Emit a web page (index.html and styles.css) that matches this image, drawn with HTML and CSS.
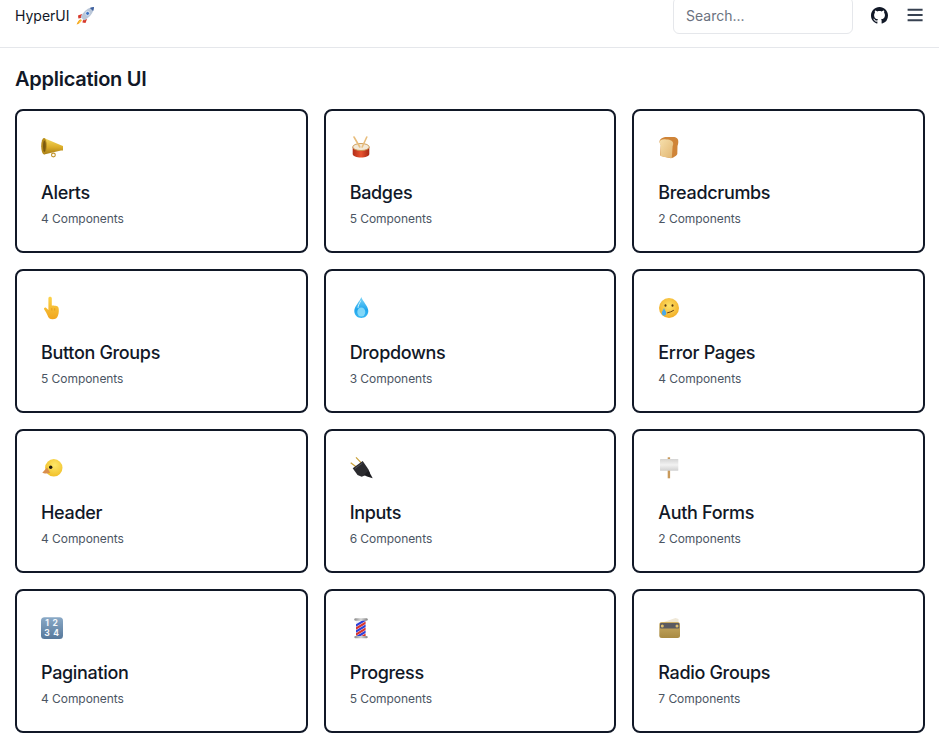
FILE: index.html
```html
<!DOCTYPE html>
<html lang="en">
<head>
<meta charset="utf-8">
<title>HyperUI</title>
<link rel="stylesheet" href="styles.css">
</head>
<body>
<svg class="defs" width="0" height="0" aria-hidden="true">
  <defs>
    <linearGradient id="gGold" x1="0" y1="0" x2="0" y2="1"><stop offset="0" stop-color="#f6dc62"/><stop offset=".55" stop-color="#dcae2a"/><stop offset="1" stop-color="#a57c16"/></linearGradient>
    <linearGradient id="gRed" x1="0" y1="0" x2="1" y2="0"><stop offset="0" stop-color="#b02e18"/><stop offset=".5" stop-color="#e8522e"/><stop offset="1" stop-color="#a62814"/></linearGradient>
    <linearGradient id="gBread" x1="0" y1="0" x2="1" y2="1"><stop offset="0" stop-color="#f6e0ad"/><stop offset="1" stop-color="#e2b671"/></linearGradient>
    <linearGradient id="gHand" x1="0" y1="0" x2="0" y2="1"><stop offset="0" stop-color="#fcd34a"/><stop offset="1" stop-color="#f0a51e"/></linearGradient>
    <linearGradient id="gDrop" x1="0" y1="0" x2="0" y2="1"><stop offset="0" stop-color="#7fd6f7"/><stop offset=".6" stop-color="#1fa6ee"/><stop offset="1" stop-color="#3bb8f2"/></linearGradient>
    <radialGradient id="gFace" cx=".5" cy=".4" r=".65"><stop offset="0" stop-color="#fde36a"/><stop offset="1" stop-color="#f2a91f"/></radialGradient>
    <radialGradient id="gChick" cx=".55" cy=".35" r=".7"><stop offset="0" stop-color="#fde768"/><stop offset="1" stop-color="#f0bd25"/></radialGradient>
    <linearGradient id="gSign" x1="0" y1="0" x2="0" y2="1"><stop offset="0" stop-color="#d5d5d5"/><stop offset=".5" stop-color="#f2f2f2"/><stop offset="1" stop-color="#d0d0d0"/></linearGradient>
    <linearGradient id="gNum" x1="0" y1="0" x2="0" y2="1"><stop offset="0" stop-color="#8aa9c6"/><stop offset="1" stop-color="#56789b"/></linearGradient>
    <linearGradient id="gRadio" x1="0" y1="0" x2="0" y2="1"><stop offset="0" stop-color="#c9ac66"/><stop offset="1" stop-color="#a88a42"/></linearGradient>
    <linearGradient id="gCap" x1="0" y1="0" x2="1" y2="0"><stop offset="0" stop-color="#8a8a8a"/><stop offset=".5" stop-color="#d8d8d8"/><stop offset="1" stop-color="#808080"/></linearGradient>
    <clipPath id="cPole"><rect x="6" y="5" width="9.6" height="16"/></clipPath>
  </defs>
</svg>

<header class="topbar">
  <a class="brand" href="#">HyperUI
    <svg class="rocket" viewBox="0 0 20 20" aria-hidden="true">
      <path d="M3 9.500 7 8 6 12 3.400 12.600z" fill="#d8392c"/>
      <path d="M10.500 17 12 13 8 14 7.400 16.600z" fill="#d8392c"/>
      <path d="M5.800 13.200 C3.500 14 2.200 16.300 1.600 18.600 C3.700 18 6 16.600 6.800 14.200z" fill="#f7a51c"/>
      <path d="M5.600 14.400 C4.600 15 4 16.200 3.600 17 C4.600 16.600 5.700 15.900 6 15z" fill="#fde25a"/>
      <path d="M19 1 C14.600 1.200 10.800 3.600 8 7.200 L5.600 11 9 14.400 12.800 12 C16.400 9.200 18.800 5.400 19 1z" fill="#b9c6d8"/>
      <path d="M19 1 C17.800 1 16.200 1.300 14.900 1.900 L18.100 5.100 C18.700 3.800 19 2.200 19 1z" fill="#3d5f9e"/>
      <circle cx="12.600" cy="7.400" r="2" fill="#3f74c4" stroke="#e8eef6" stroke-width=".9"/>
    </svg>
  </a>
  <div class="actions">
    <input class="search" type="text" placeholder="Search...">
    <a class="github" href="#" aria-label="GitHub">
      <svg viewBox="0 0 16 16" aria-hidden="true"><path fill="#111827" d="M8 0C3.58 0 0 3.58 0 8c0 3.54 2.29 6.53 5.47 7.59.4.07.55-.17.55-.38 0-.19-.01-.82-.01-1.49-2.01.37-2.53-.49-2.69-.94-.09-.23-.48-.94-.82-1.13-.28-.15-.68-.52-.01-.53.63-.01 1.08.58 1.23.82.72 1.21 1.87.87 2.33.66.07-.52.28-.87.51-1.07-1.78-.2-3.64-.89-3.64-3.95 0-.87.31-1.59.82-2.15-.08-.2-.36-1.02.08-2.12 0 0 .67-.21 2.2.82.64-.18 1.32-.27 2-.27s1.36.09 2 .27c1.53-1.04 2.2-.82 2.2-.82.44 1.1.16 1.92.08 2.12.51.56.82 1.27.82 2.15 0 3.07-1.87 3.75-3.65 3.95.29.25.54.73.54 1.48 0 1.07-.01 1.93-.01 2.2 0 .21.15.46.55.38A8.01 8.01 0 0 0 16 8c0-4.42-3.58-8-8-8z"/></svg>
    </a>
    <button class="menu" type="button" aria-label="Menu">
      <svg viewBox="0 0 20 20" aria-hidden="true"><path d="M2.600 4.800h15M2.600 10h15M2.600 15.200h15" stroke="#374151" stroke-width="1.900" fill="none"/></svg>
    </button>
  </div>
</header>

<main class="page">
  <h2 class="section-title">Application UI</h2>
  <div class="grid">

    <a class="card" href="#">
      <svg class="emoji" viewBox="0 0 28 28" aria-hidden="true">
        <circle cx="12.400" cy="20" r="1.900" fill="none" stroke="#c0932a" stroke-width="1.100"/>
        <path d="M3 3 L20 10.200 L22 10.900 V15.400 L20 15.600 L3 19.500z" fill="url(#gGold)"/>
        <ellipse cx="3" cy="11.200" rx="2.800" ry="8.300" fill="#b58a1c"/>
        <ellipse cx="3.400" cy="11.200" rx="1.400" ry="5.800" fill="#7a5a10"/>
      </svg>
      <h3 class="card-title">Alerts</h3>
      <p class="card-sub">4 Components</p>
    </a>

    <a class="card" href="#">
      <svg class="emoji" viewBox="0 0 28 28" aria-hidden="true">
        <path d="M2.700 12 V19 C2.700 21 6.500 22.600 11 22.600 C15.500 22.600 19.300 21 19.300 19 V12z" fill="url(#gRed)"/>
        <ellipse cx="11" cy="12" rx="8.300" ry="3.500" fill="#f3e9d8" stroke="#c9964f" stroke-width=".9"/>
        <path d="M4 2 L9.800 12 M16.800 2 L12.200 12" stroke="#e8bd7c" stroke-width="1.600" stroke-linecap="round"/>
      </svg>
      <h3 class="card-title">Badges</h3>
      <p class="card-sub">5 Components</p>
    </a>

    <a class="card" href="#">
      <svg class="emoji" viewBox="0 0 28 28" aria-hidden="true">
        <path d="M1.500 7 C1.500 3.500 5 2 9 2 H15 C18.500 2 20.500 3.800 20.300 7 C20.300 9 19.700 10 19.500 11 L19.300 19 C19 20.500 15 23 13 23.300 L3 21 C2 20.500 2 19.500 2.200 18.500 L2.800 10z" fill="#cf8438"/>
        <path d="M1.500 7.500 C1.500 5 4 4 7 4.200 C11 4.500 15 5 15.200 8.500 C15.200 10 14.800 10.500 14.600 11.500 L13.800 23 C10 22.800 5 21.800 3 21 C2.200 20.600 2.400 19.500 2.500 18 L2.700 10.500z" fill="url(#gBread)"/>
      </svg>
      <h3 class="card-title">Breadcrumbs</h3>
      <p class="card-sub">2 Components</p>
    </a>

    <a class="card" href="#">
      <svg class="emoji" viewBox="0 0 28 28" aria-hidden="true">
        <path d="M7.400 3.300 C7.400 1.300 10.800 1.300 10.800 3.300 V10.600 C13 10.600 16.500 10.800 17.400 12.400 C18 14 18 18 17 20.500 C16.200 23.300 14.300 24.300 11.600 24.300 C8.600 24.300 7.200 22.800 6.600 20.500 L5 17.300 L3.100 14.300 C2.600 13 4.200 12 5.300 13 L7.400 15z" fill="url(#gHand)"/>
        <path d="M10.800 13 V15.500 M13.700 13.200 V15.500" stroke="#d98a14" stroke-width=".6"/>
      </svg>
      <h3 class="card-title">Button Groups</h3>
      <p class="card-sub">5 Components</p>
    </a>

    <a class="card" href="#">
      <svg class="emoji" viewBox="0 0 28 28" aria-hidden="true">
        <path d="M11.300 2 C10.200 6 4.300 11 4.300 16 C4.300 20.200 7.400 23 11.300 23 C15.200 23 18.300 20.200 18.300 16 C18.300 11 12.400 6 11.300 2z" fill="url(#gDrop)"/>
        <ellipse cx="11.300" cy="17" rx="4" ry="4.600" fill="#9fe6fb" opacity=".75"/>
        <path d="M10.600 6 C9.500 8.500 8 10.500 8 12.500" stroke="#c8f0fc" stroke-width="1" fill="none" stroke-linecap="round"/>
      </svg>
      <h3 class="card-title">Dropdowns</h3>
      <p class="card-sub">3 Components</p>
    </a>

    <a class="card" href="#">
      <svg class="emoji" viewBox="0 0 28 28" aria-hidden="true">
        <circle cx="11" cy="13" r="10" fill="url(#gFace)"/>
        <ellipse cx="7.500" cy="10.500" rx="1" ry="1.300" fill="#5b3a12"/>
        <ellipse cx="14.500" cy="10.500" rx="1" ry="1.300" fill="#5b3a12"/>
        <path d="M9.500 17.800 C11.500 17.300 14 16.600 15.500 15.500" stroke="#6b3f10" stroke-width="1" fill="none" stroke-linecap="round"/>
        <path d="M6 13 C5.400 15 3.800 16.400 3.800 18 C3.800 19.600 4.900 20.600 6 20.600 C7.200 20.600 8.300 19.600 8.300 18 C8.300 16.400 6.600 15 6 13z" fill="#4aa9e8"/>
      </svg>
      <h3 class="card-title">Error Pages</h3>
      <p class="card-sub">4 Components</p>
    </a>

    <a class="card" href="#">
      <svg class="emoji" viewBox="0 0 28 28" aria-hidden="true">
        <circle cx="12.800" cy="12.800" r="8.700" fill="url(#gChick)"/>
        <path d="M6 12.500 L1.300 17.800 C3 18.800 7 18.800 9.200 17.800z" fill="#d98f4d"/>
        <circle cx="9.700" cy="12.300" r="1.700" fill="#1f1a10"/>
      </svg>
      <h3 class="card-title">Header</h3>
      <p class="card-sub">4 Components</p>
    </a>

    <a class="card" href="#">
      <svg class="emoji" viewBox="0 0 28 28" aria-hidden="true">
        <path d="M.7 7.700 L7 12.500 M6 2.300 L11.700 8.300" stroke="#c9a13a" stroke-width="1.200"/>
        <path d="M2.700 13.300 L12.700 6 L18.500 14.500 L20 18.300 L11.700 21.700 L7.500 20z" fill="#2b2b2f"/>
        <path d="M18.500 15.500 L22.700 23.300 L17 21.500 L14 20z" fill="#1c1c20"/>
        <path d="M5 13.500 L12.500 8" stroke="#5c5c62" stroke-width=".8"/>
      </svg>
      <h3 class="card-title">Inputs</h3>
      <p class="card-sub">6 Components</p>
    </a>

    <a class="card" href="#">
      <svg class="emoji" viewBox="0 0 28 28" aria-hidden="true">
        <rect x="9.700" y="2.300" width="2.400" height="21" fill="#c99a5b"/>
        <rect x="2" y="4" width="18.300" height="11.800" rx=".6" fill="url(#gSign)"/>
      </svg>
      <h3 class="card-title">Auth Forms</h3>
      <p class="card-sub">2 Components</p>
    </a>

    <a class="card" href="#">
      <svg class="emoji" viewBox="0 0 28 28" aria-hidden="true">
        <rect x="0" y="2.300" width="22" height="21.700" rx="3.500" fill="url(#gNum)"/>
        <text class="num" x="11" y="11.400">1 2</text>
        <text class="num" x="11" y="20.900">3 4</text>
      </svg>
      <h3 class="card-title">Pagination</h3>
      <p class="card-sub">4 Components</p>
    </a>

    <a class="card" href="#">
      <svg class="emoji" viewBox="0 0 28 28" aria-hidden="true">
        <rect x="6" y="5" width="9.600" height="16" fill="#f4f4f6"/>
        <g clip-path="url(#cPole)">
          <path d="M5 11 L17 4 M5 17 L17 10 M5 23 L17 16" stroke="#2f3fd8" stroke-width="2.200"/>
          <path d="M5 14 L17 7 M5 20 L17 13 M5 26 L17 19" stroke="#d8342f" stroke-width="2.200"/>
        </g>
        <rect x="4.300" y="3.300" width="13.400" height="2.400" rx="1.200" fill="url(#gCap)"/>
        <rect x="4.300" y="20.900" width="13.400" height="2.400" rx="1.200" fill="url(#gCap)"/>
      </svg>
      <h3 class="card-title">Progress</h3>
      <p class="card-sub">5 Components</p>
    </a>

    <a class="card" href="#">
      <svg class="emoji" viewBox="0 0 28 28" aria-hidden="true">
        <path d="M3 8 L17.500 3 L20.500 4 L20.500 8z" fill="#efe8d8"/>
        <rect x="1.300" y="7" width="20.700" height="16" rx="2.500" fill="url(#gRadio)"/>
        <rect x="2" y="8" width="19.300" height="5.500" rx="1" fill="#5a5a60"/>
        <circle cx="4.300" cy="11" r="1.500" fill="#e0c070"/>
        <circle cx="19" cy="11" r="1.500" fill="#e0c070"/>
      </svg>
      <h3 class="card-title">Radio Groups</h3>
      <p class="card-sub">7 Components</p>
    </a>

  </div>
</main>
</body>
</html>
```

FILE: styles.css
```css
* { box-sizing: border-box; }

html, body {
  margin: 0;
  padding: 0;
  background: #fff;
}

html { overflow: hidden; }

body {
  margin-top: -16px;
  font-family: Inter, "Liberation Sans", sans-serif;
  color: #111827;
}

.defs { position: absolute; }

a { color: inherit; text-decoration: none; }

.topbar {
  display: flex;
  align-items: center;
  justify-content: space-between;
  height: 64px;
  padding: 0 14px 0 15px;
  border-bottom: 1px solid #e5e7eb;
}

.brand {
  display: flex;
  align-items: center;
  gap: 5px;
  font-size: 14px;
  line-height: 20px;
  font-weight: 400;
}

.rocket { width: 20px; height: 20px; display: block; }

.actions {
  display: flex;
  align-items: center;
  margin-bottom: 1px;
}

.search {
  width: 180px;
  height: 37px;
  padding: 0 12px;
  border: 1px solid #e5e7eb;
  border-radius: 6px;
  font: 400 14px/20px Inter, "Liberation Sans", sans-serif;
  outline: none;
}

.search::placeholder { color: #6b7280; opacity: 1; }

.github {
  display: block;
  width: 17px;
  height: 17px;
  margin-left: 18px;
}

.github svg, .menu svg { display: block; width: 100%; height: 100%; }

.menu {
  width: 20px;
  height: 20px;
  margin-left: 17px;
  padding: 0;
  border: 0;
  background: none;
}

.page {
  padding: 19px 14px 0 15px;
}

.section-title {
  margin: 0;
  font-size: 20px;
  line-height: 24px;
  font-weight: 600;
  letter-spacing: -0.27px;
}

.grid {
  display: grid;
  grid-template-columns: repeat(3, 1fr);
  gap: 16px;
  margin-top: 18px;
}

.card {
  display: block;
  height: 144px;
  padding: 24px;
  border: 2px solid #111827;
  border-radius: 8px;
}

.emoji {
  display: block;
  width: 28px;
  height: 28px;
  overflow: visible;
}

.num {
  font: 700 8.5px Inter, "Liberation Sans", sans-serif;
  fill: #f4f7fb;
  text-anchor: middle;
  letter-spacing: .8px;
}

.card-title {
  margin: 16px 0 0;
  font-size: 18px;
  line-height: 28px;
  font-weight: 450;
  letter-spacing: -0.33px;
}

.card-sub {
  margin: 4px 0 0;
  font-size: 12px;
  line-height: 16px;
  color: #4b5563;
  letter-spacing: -0.05px;
}
```
